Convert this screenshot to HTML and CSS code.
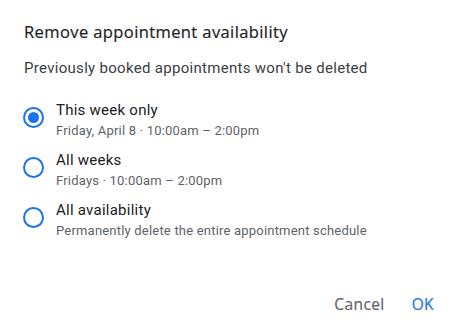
FILE: index.html
```html
<!DOCTYPE html>
<html>
<head>
<meta charset="utf-8">
<link rel="stylesheet" href="styles.css">
</head>
<body>
<div class="dialog">
  <h1 class="title">Remove appointment availability</h1>
  <p class="subtitle">Previously booked appointments won't be deleted</p>
  <div class="options">
    <label class="option">
      <span class="radio checked"><span class="dot"></span></span>
      <span class="texts">
        <span class="label">This week only</span>
        <span class="desc">Friday, April 8 · 10:00am – 2:00pm</span>
      </span>
    </label>
    <label class="option">
      <span class="radio"></span>
      <span class="texts">
        <span class="label">All weeks</span>
        <span class="desc">Fridays · 10:00am – 2:00pm</span>
      </span>
    </label>
    <label class="option">
      <span class="radio"></span>
      <span class="texts">
        <span class="label">All availability</span>
        <span class="desc">Permanently delete the entire appointment schedule</span>
      </span>
    </label>
  </div>
  <div class="actions">
    <button class="btn cancel">Cancel</button>
    <button class="btn ok">OK</button>
  </div>
</div>
</body>
</html>
```
FILE: styles.css
```css
html, body {
  margin: 0;
  padding: 0;
  background: #ffffff;
}
.dialog {
  width: 450px;
  height: 326px;
  box-sizing: border-box;
  padding: 20px 16px 0 24px;
  font-family: Roboto, "Noto Sans", sans-serif;
  display: flex;
  flex-direction: column;
}
.title {
  margin: 0;
  font-family: "Open Sans", Roboto, sans-serif;
  font-size: 16.5px;
  line-height: 24px;
  font-weight: 500;
  color: #202124;
  letter-spacing: 0.4px;
  -webkit-text-stroke: 0.2px #202124;
}
.subtitle {
  margin: 14px 0 0 0;
  font-size: 15px;
  line-height: 20px;
  color: #3c4043;
  letter-spacing: 0.3px;
}
.options {
  margin-top: 22px;
  display: flex;
  flex-direction: column;
  gap: 9px;
}
.option {
  display: flex;
  align-items: flex-start;
  gap: 12px;
}
.radio {
  width: 21px;
  height: 21px;
  box-sizing: border-box;
  border: 2px solid #1a73e8;
  border-radius: 50%;
  margin-top: 7px;
  margin-left: -1px;
  display: flex;
  align-items: center;
  justify-content: center;
  flex: none;
}
.dot {
  width: 11px;
  height: 11px;
  border-radius: 50%;
  background: #1a73e8;
}
.texts {
  display: flex;
  flex-direction: column;
}
.label {
  font-size: 15px;
  line-height: 20px;
  color: #202124;
  letter-spacing: 0.25px;
}
.desc {
  font-size: 13px;
  line-height: 20px;
  margin-top: 1px;
  color: #5f6368;
  letter-spacing: 0.2px;
}
.actions {
  margin-top: auto;
  display: flex;
  justify-content: flex-end;
  align-items: center;
  gap: 27px;
  height: 45px;
}
.btn {
  background: none;
  border: none;
  padding: 0;
  font-family: "Open Sans", Roboto, sans-serif;
  font-size: 15.5px;
  font-weight: 500;
  line-height: 20px;
  letter-spacing: 0.4px;
}
.cancel { color: #5f6368; -webkit-text-stroke: 0.2px #5f6368; }
.ok { color: #1a73e8; -webkit-text-stroke: 0.2px #1a73e8; }
```
